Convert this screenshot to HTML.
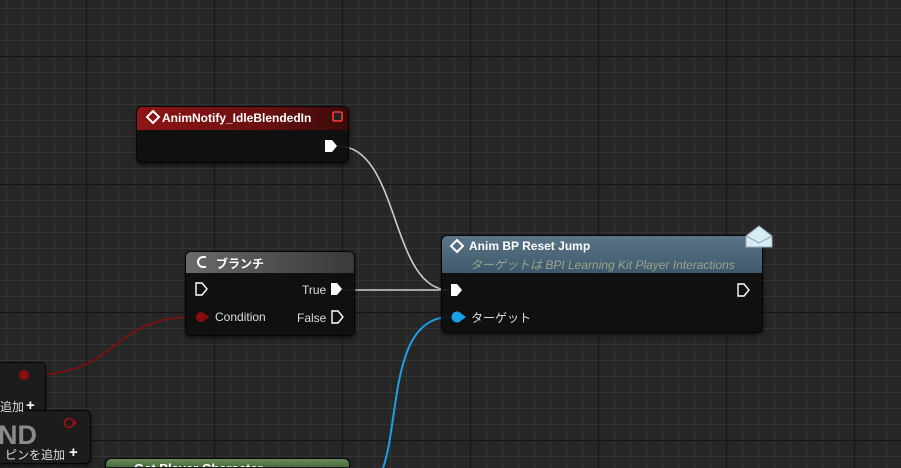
<!DOCTYPE html>
<html style="overflow:hidden;width:901px;height:468px"><head><meta charset="utf-8"><style>
body{margin:0;width:901px;height:468px;overflow:hidden;background:#262626;font-family:"Liberation Sans","Noto Sans CJK JP",sans-serif;position:relative}
.grid{position:absolute;inset:0;
background-image:
linear-gradient(90deg,#151515 0 1px,transparent 1px),
linear-gradient(180deg,#151515 0 1px,transparent 1px),
linear-gradient(90deg,#353535 0 1px,transparent 1px),
linear-gradient(180deg,#353535 0 1px,transparent 1px);
background-size:128px 128px,128px 128px,16px 16px,16px 16px;
background-position:86px 0,0 56px,6px 0,0 8px}
.node{position:absolute;background:rgba(14,14,14,.92);border:1px solid #050505;border-radius:6px;box-shadow:0 2px 4px rgba(0,0,0,.6);overflow:hidden}
.hdr{color:#fff;font-weight:bold;font-size:12px;padding-left:28px;position:relative}
.t{position:absolute;color:#ddd;font-size:12px}
svg{position:absolute;left:0;top:0}
</style></head><body>
<div class="grid"></div>
<svg width="901" height="468">
<path d="M338 146 C400 146,390 290,449 290" stroke="#cfcfcf" stroke-width="1.6" fill="none"/>
<path d="M342 290 L449 290" stroke="#cfcfcf" stroke-width="1.6" fill="none"/>
<path d="M30 375 C120 375,110 317,193 317" stroke="#8a0c0c" stroke-width="1.6" fill="none"/>
<path d="M450 317 C390 317,400 420,383 468" stroke="#1aa0e6" stroke-width="2" fill="none"/>
</svg>
<div class="node" style="left:-10px;top:362px;width:54px;height:50px;background:#1c1c1c"></div>
<div class="node" style="left:-10px;top:410px;width:99px;height:52px;background:#1c1c1c"></div>
<div class="t" style="left:0;top:398px">追加</div>
<div class="t" style="left:26px;top:397px;font-weight:bold;font-size:15px;color:#fff">+</div>
<div class="t" style="left:-2px;top:420px;font-size:27px;font-weight:bold;color:#8a8a8a">ND</div>
<div class="t" style="left:5px;top:446px">ピンを追加</div>
<div class="t" style="left:69px;top:444px;font-weight:bold;font-size:15px;color:#fff">+</div>
<div class="node" style="left:105px;top:458px;width:243px;height:8px;border-bottom:none;border-radius:6px 6px 0 0;background:linear-gradient(#6a8a5a,#4a6a40)"><div class="hdr" style="top:2px;font-size:13px">Get Player Character</div></div>
<div class="node" style="left:136px;top:106px;width:211px;height:55px">
<div style="height:23px;background:linear-gradient(90deg,#8e1515,#6a1010 60%,#3a0a0a)"><div class="hdr" style="top:4px;padding-left:25px">AnimNotify_IdleBlendedIn</div></div>
</div>
<div class="node" style="left:185px;top:251px;width:168px;height:83px">
<div style="height:21px;background:linear-gradient(90deg,#6a6a6a,#505050 50%,#3a3a3a)"><div class="hdr" style="top:3px;padding-left:30px">ブランチ</div></div>
</div>
<div class="t" style="left:302px;top:283px">True</div>
<div class="t" style="left:297px;top:311px">False</div>
<div class="t" style="left:215px;top:310px">Condition</div>
<div class="node" style="left:441px;top:235px;width:320px;height:96px">
<div style="height:37px;background:linear-gradient(180deg,#5a7488,#3e586c)"><div class="hdr" style="top:3px;padding-left:27px">Anim BP Reset Jump</div>
<div style="position:absolute;left:28px;top:20px;font-size:12px;font-style:italic;color:#9aa48a">ターゲットは BPI Learning Kit Player Interactions</div></div>
</div>
<div class="t" style="left:471px;top:309px">ターゲット</div>
<svg width="901" height="468">
<path d="M153 111 L159 117 L153 123 L147 117Z" fill="none" stroke="#fff" stroke-width="2"/>
<rect x="333" y="112" width="9" height="9" rx="1.5" fill="#222" stroke="#ff3a3a" stroke-width="1.6"/>
<path d="M457 240 L463 246 L457 252 L451 246Z" fill="none" stroke="#fff" stroke-width="2"/>
<path d="M203 257 A5 5 0 1 0 203 267 M203 257 H206 M203 267 H206" fill="none" stroke="#fff" stroke-width="2"/>
<path d="M746 236 L759 226 L772 236 L772 247 L746 247Z" fill="#d8ecf4" stroke="#9ab" stroke-width="1"/>
<path d="M746 236 L759 243 L772 236" fill="none" stroke="#8ab" stroke-width="1"/>
<path d="M325 140 H332 L337 146 L332 152 H325Z" fill="#fff"/>
<path d="M196 283 H202 L207 289 L202 295 H196Z" fill="none" stroke="#fff" stroke-width="1.4"/>
<path d="M331 283 H337 L342 289 L337 295 H331Z" fill="#fff"/>
<path d="M332 311 H338 L343 317 L338 323 H332Z" fill="none" stroke="#fff" stroke-width="1.4"/>
<path d="M451 284 H457 L462 290 L457 296 H451Z" fill="#fff"/>
<path d="M738 284 H744 L749 290 L744 296 H738Z" fill="none" stroke="#fff" stroke-width="1.4"/>
<circle cx="201" cy="317" r="5" fill="#8a0c0c"/><path d="M206 314 L209 317 L206 320Z" fill="#8a0c0c"/>
<circle cx="457" cy="317" r="5.5" fill="#1aa0e6"/><path d="M462 314 L466 317 L462 320Z" fill="#1aa0e6"/>
<circle cx="24" cy="375" r="5" fill="#8a0c0c"/>
<circle cx="69" cy="423" r="4.5" fill="none" stroke="#a01010" stroke-width="1.6"/><path d="M74 420 L77 423 L74 426Z" fill="#a01010"/>
</svg>
</body></html>
